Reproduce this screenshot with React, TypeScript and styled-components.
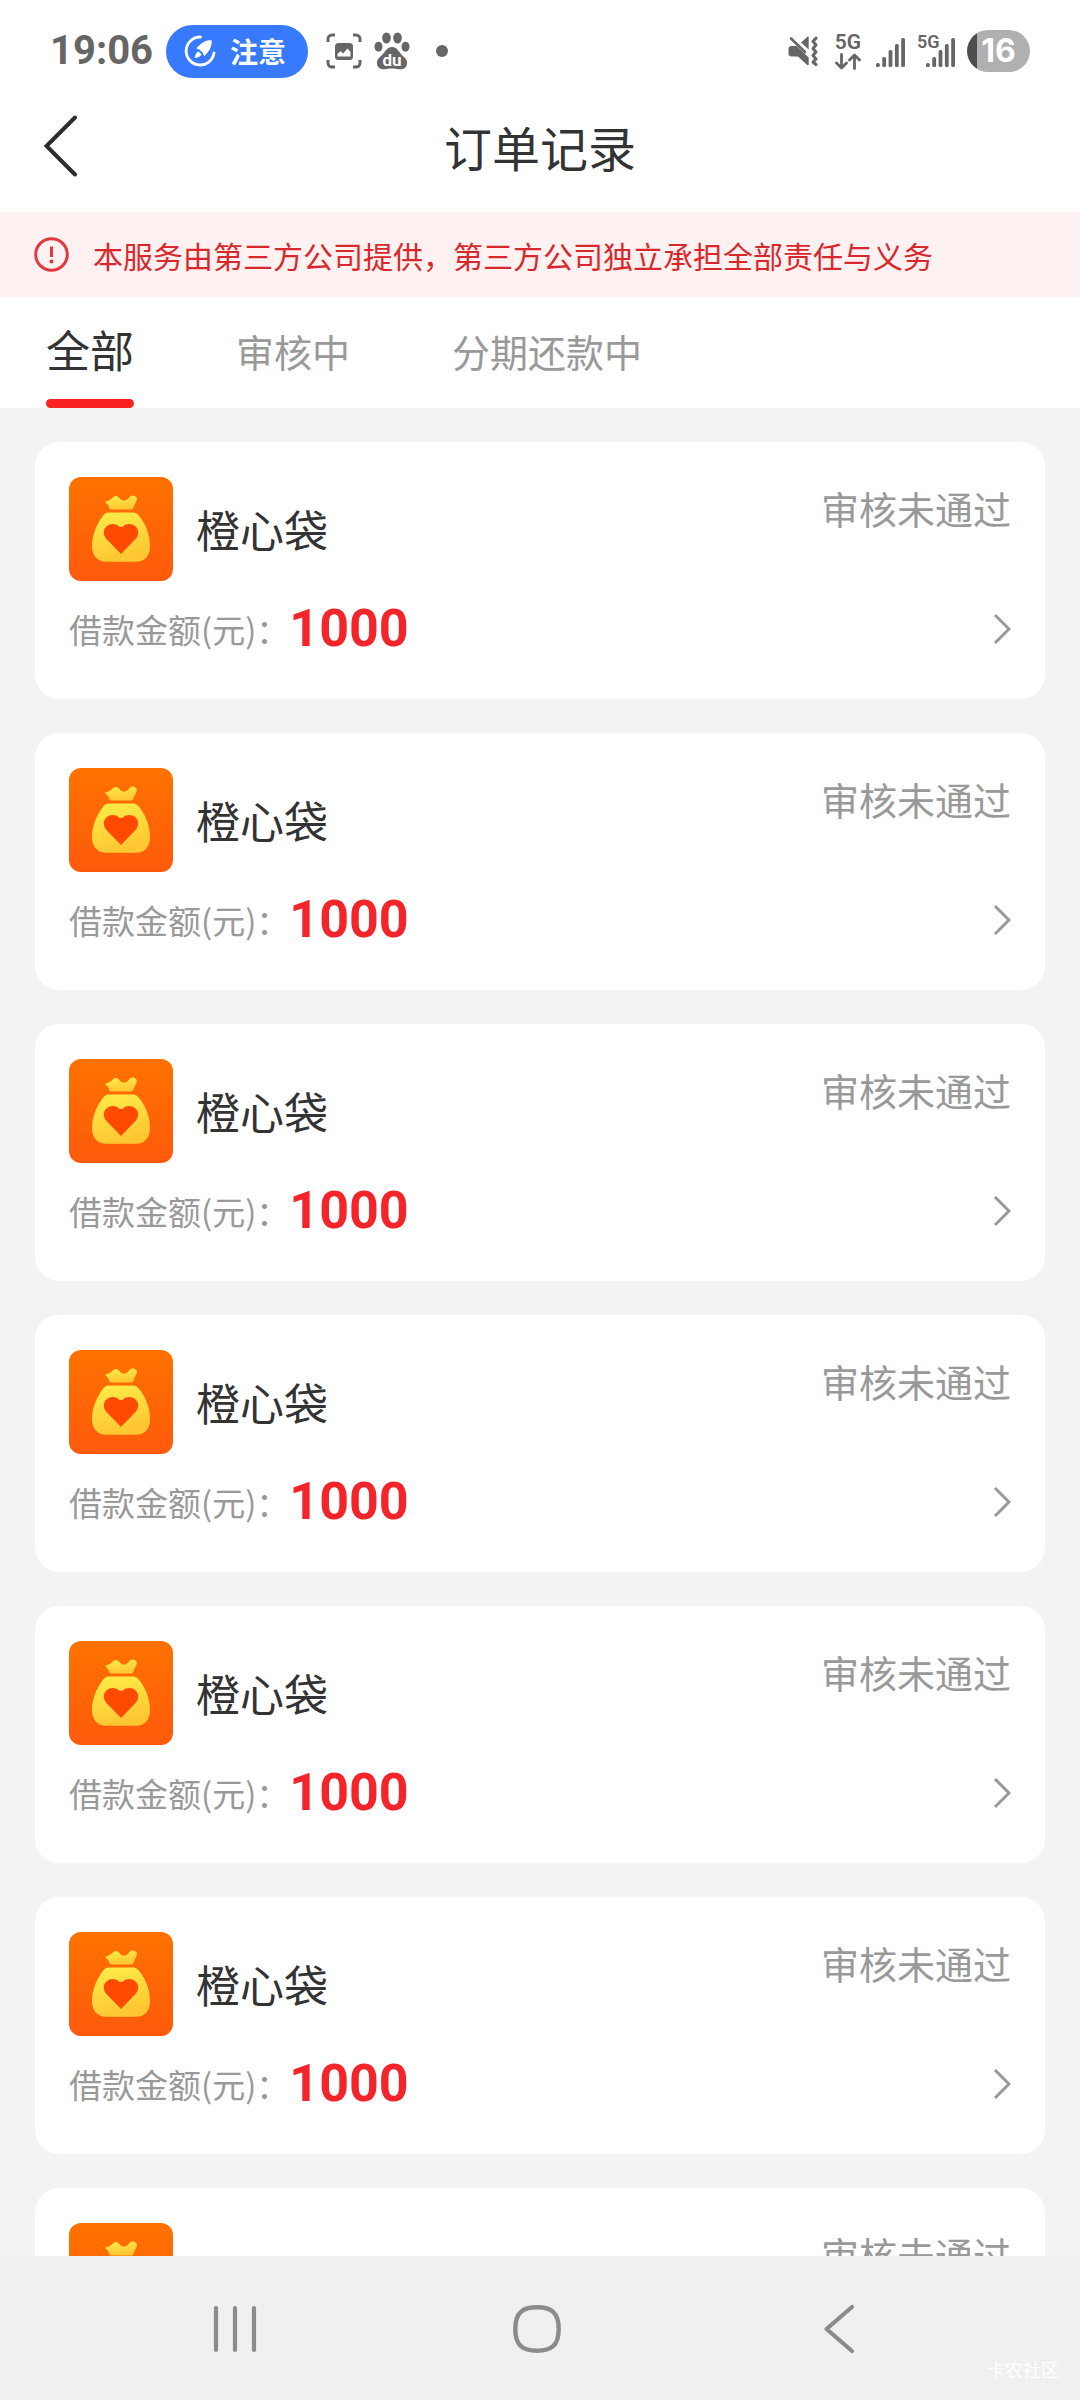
import React, { useState } from "react";
import styled, { createGlobalStyle } from "styled-components";

const cjk = `"Noto Sans CJK SC", sans-serif`;
const latin = `Roboto, "Noto Sans CJK SC", sans-serif`;

const GlobalStyle = createGlobalStyle`
  *, *::before, *::after { box-sizing: border-box; }
  body { margin: 0; background: #f3f3f3; font-family: ${cjk}; color: #333; }
  button { padding: 0; border: 0; background: none; font: inherit; color: inherit; cursor: pointer; }
  svg { display: block; flex: none; }
`;

const Screen = styled.div`
  display: flex;
  flex-direction: column;
  height: 100vh;
  background: #f3f3f3;
`;

const StatusBar = styled.div`
  display: flex;
  flex: none;
  align-items: center;
  justify-content: space-between;
  height: 102px;
  padding: 0 50px;
  background: #fff;
  color: #666;
  font-family: ${latin};
`;

const StatusGroup = styled.div<{ $gap: number }>`
  display: flex;
  align-items: center;
  gap: ${(p) => p.$gap}px;
`;

const Clock = styled.time`
  font-size: 40px;
  font-weight: 700;
  line-height: 48px;
`;

const NoticePill = styled.div`
  display: flex;
  align-items: center;
  gap: 14px;
  height: 53px;
  margin: 0 6px 0 1px;
  padding: 0 22px 0 18px;
  border-radius: 27px;
  background: #387aff;
  color: #fff;
  font-family: ${cjk};
  font-size: 28px;
  font-weight: 700;
  line-height: 53px;
`;

const Dot = styled.span`
  width: 12px;
  height: 12px;
  margin-left: 14px;
  border-radius: 50%;
  background: #666;
`;

const Network = styled.div`
  display: flex;
  flex-direction: column;
  align-items: center;
  gap: 2px;
  margin: 0 4px 0 6px;
  font-size: 21px;
  font-weight: 600;
  line-height: 18px;
`;

const Battery = styled.div`
  display: flex;
  align-items: center;
  justify-content: center;
  width: 63px;
  height: 42px;
  border-radius: 21px;
  background: linear-gradient(to right, #4d4d4d 10px, #b0b0b0 10px);
  color: #fff;
  font-family: Inter, ${latin};
  font-size: 32px;
  font-weight: 700;
  line-height: 42px;
`;

const Header = styled.header`
  display: grid;
  flex: none;
  grid-template-columns: 120px 1fr 120px;
  align-items: center;
  height: 110px;
  padding-bottom: 22px;
  background: #fff;
`;

const BackButton = styled.button`
  display: flex;
  padding-left: 43px;
`;

const Title = styled.h1`
  margin: 0;
  font-size: 48px;
  font-weight: 400;
  line-height: 72px;
  text-align: center;
`;

const Notice = styled.div`
  display: flex;
  flex: none;
  align-items: center;
  gap: 24px;
  min-height: 85px;
  padding: 0 34px;
  background: #fef1f1;
  color: #d9282b;
  font-size: 30px;
  line-height: 44px;
`;

const Tabs = styled.div`
  display: flex;
  flex: none;
  gap: 102px;
  height: 111px;
  padding: 0 46px;
  background: #fff;
`;

const Tab = styled.button<{ $active: boolean }>`
  display: flex;
  flex-direction: column;
  justify-content: space-between;
  padding-top: ${(p) => (p.$active ? 4 : 6)}px;
  color: ${(p) => (p.$active ? "#333" : "#999")};
  font-size: ${(p) => (p.$active ? 44 : 38)}px;
  line-height: 96px;

  &::after {
    content: "";
    width: 100%;
    height: 9px;
    border-radius: 5px;
    background: ${(p) => (p.$active ? "#fa2323" : "transparent")};
  }
`;

const OrderList = styled.ul`
  display: flex;
  flex: 1;
  flex-direction: column;
  gap: 34px;
  min-height: 0;
  margin: 0;
  padding: 34px 35px;
  overflow-y: auto;
  scrollbar-width: none;
  list-style: none;
`;

const Card = styled.li`
  flex: none;
  padding: 35px 34px 40px;
  border-radius: 24px;
  background: #fff;
`;

const CardHead = styled.div`
  display: flex;
  align-items: center;
  gap: 23px;
`;

const ProductName = styled.h2`
  flex: 1;
  margin: 0;
  font-size: 44px;
  font-weight: 400;
  line-height: 64px;
`;

const OrderStatus = styled.span`
  align-self: flex-start;
  color: #999;
  font-size: 38px;
  line-height: 62px;
`;

const CardFoot = styled.div`
  display: flex;
  align-items: center;
  justify-content: space-between;
  height: 60px;
  margin-top: 18px;
`;

const Amount = styled.p`
  display: flex;
  align-items: center;
  margin: 0;
`;

const AmountLabel = styled.span`
  color: #999;
  font-size: 33px;
  line-height: 60px;
`;

const AmountValue = styled.strong`
  color: #f4252a;
  font-family: ${latin};
  font-size: 52px;
  font-weight: 700;
  line-height: 60px;
`;

const NavBar = styled.nav`
  position: relative;
  display: flex;
  flex: none;
  height: 144px;
  padding: 2px 90px 0 84px;
  background: #f0f0f3;
`;

const NavButton = styled.button`
  display: flex;
  flex: 1;
  align-items: center;
  justify-content: center;
`;

const Watermark = styled.span`
  position: absolute;
  right: 21px;
  bottom: 18px;
  color: #fff;
  font-size: 18px;
  line-height: 26px;
`;

const RocketIcon = () => (
  <svg width="32" height="32" viewBox="0 0 32 32" fill="none" aria-hidden="true">
    <path d="M16.5 2A14 14 0 1 0 30 18" stroke="#fff" strokeWidth="2.8" strokeLinecap="round" />
    <path d="M27.5 5c.8 5.500-1.300 10.500-7.200 16.200l-1.600-3.400-3-3-3.400-1.400C16.700 8.200 21.500 5 27.500 5Z" fill="#fff" />
    <path d="M14.500 16.500l3 2.800c-.8 2.200-3 3.500-6.700 3.700.2-2.900 1.300-5.300 3.700-6.500Z" fill="#fff" />
  </svg>
);

const CaptureIcon = () => (
  <svg width="36" height="36" viewBox="0 0 36 36" fill="none" aria-hidden="true">
    <path
      d="M2 9V6a4 4 0 0 1 4-4h3M27 2h3a4 4 0 0 1 4 4v3M34 27v3a4 4 0 0 1-4 4h-3M9 34H6a4 4 0 0 1-4-4v-3"
      stroke="#666"
      strokeWidth="3"
    />
    <rect x="9" y="10" width="18" height="17" rx="3.500" fill="#666" />
    <path d="M11.500 23.500v-2.500l3-3 2.500 2.500 4.500-5 3 3.500v4.500Z" fill="#fff" />
  </svg>
);

const PawIcon = () => (
  <svg width="36" height="38" viewBox="0 0 36 38" fill="#666" aria-hidden="true">
    <ellipse cx="12.500" cy="6" rx="4.300" ry="5.500" />
    <ellipse cx="23.500" cy="6" rx="4.300" ry="5.500" />
    <ellipse cx="4.500" cy="14.800" rx="4" ry="5" />
    <ellipse cx="31.500" cy="14.800" rx="4" ry="5" />
    <path d="M18 15c5 0 6.500 4.500 10 8 3.500 3.200 5.500 5 5 9-.6 4.300-4.300 5.500-7.500 5.300-2.800-.2-4.700-.8-7.500-.8s-4.700.6-7.500.8C7.300 37.500 3.600 36.300 3 32c-.5-4 1.500-5.800 5-9 3.500-3.500 5-8 10-8Z" />
    <text x="18" y="34" textAnchor="middle" fill="#fff" fontSize="17" fontWeight="700" fontFamily="Roboto, sans-serif">
      du
    </text>
  </svg>
);

const MuteIcon = () => (
  <svg width="30" height="30" viewBox="0 0 30 30" fill="none" aria-hidden="true">
    <path d="M13 6.500 19.500 0.800c.6-.5 1.200-.2 1.200.6V13.500Z" fill="#666" />
    <path d="M3.500 10H8.500L20.700 21.500v7c0 .9-.8 1.200-1.500.6L10 20.500H3.500C1.500 20.500.5 19.300.5 17.500v-4.500c0-1.800 1-3 3-3Z" fill="#666" />
    <path d="M3 2.500 17 16" stroke="#666" strokeWidth="2.600" strokeLinecap="round" />
    <path
      d="m28 2-3 3.500 3 3.500-3 3.500 3 3.500-3 3.500 3 3.500-3 3 3 2.500"
      stroke="#666"
      strokeWidth="3"
      strokeLinecap="round"
      strokeLinejoin="round"
    />
  </svg>
);

const ArrowsIcon = () => (
  <svg width="26" height="17" viewBox="0 0 26 17" fill="none" stroke="#666" strokeWidth="2.800" strokeLinecap="round" strokeLinejoin="round" aria-hidden="true">
    <path d="M6.500 1.500v13M1.500 10l5 5 5-5" />
    <path d="M19.500 15.500v-13M14.500 7l5-5 5 5" />
  </svg>
);

const signalBars = [4, 10, 17, 23, 29];

const SignalIcon = ({ label }: { label?: string }) => {
  const offset = label ? 9 : 0;
  return (
    <svg width={30 + offset} height="36" viewBox={`0 0 ${30 + offset} 36`} fill="#666" aria-hidden="true">
      {signalBars.map((h, i) => (
        <rect key={h} x={offset + i * 6.3} y={34 - h} width="3.800" height={h} rx="1.600" />
      ))}
      {label && (
        <text x="0" y="15" fontSize="18" fontWeight="600" fontFamily="Roboto, sans-serif">
          {label}
        </text>
      )}
    </svg>
  );
};

const BackIcon = () => (
  <svg width="36" height="62" viewBox="0 0 36 62" fill="none" aria-hidden="true">
    <path d="M32 2.500 3.500 31 32 59.500" stroke="#2d2d2d" strokeWidth="4" strokeLinecap="round" />
  </svg>
);

const AlertIcon = () => (
  <svg width="35" height="35" viewBox="0 0 35 35" fill="none" aria-hidden="true">
    <circle cx="17.500" cy="17.500" r="15.800" stroke="#e03a3d" strokeWidth="3" />
    <path d="M17.500 9.500v10.500" stroke="#e03a3d" strokeWidth="3" />
    <circle cx="17.500" cy="24.500" r="2" fill="#e03a3d" />
  </svg>
);

const MoneyBagIcon = ({ id }: { id: string }) => (
  <svg width="104" height="104" viewBox="0 0 104 104" aria-hidden="true">
    <defs>
      <linearGradient id={`${id}-tile`} x1="0" y1="0" x2="0" y2="1">
        <stop offset="0" stopColor="#ff7200" />
        <stop offset="1" stopColor="#ff5a0c" />
      </linearGradient>
      <linearGradient id={`${id}-bag`} x1="0" y1="0" x2="0.300" y2="1">
        <stop offset="0" stopColor="#ffee4a" />
        <stop offset="1" stopColor="#ffc732" />
      </linearGradient>
    </defs>
    <rect width="104" height="104" rx="12" fill={`url(#${id}-tile)`} />
    <path
      d="M36 24.500c3-.8 5.500-1.500 8-4.300 2-1.800 4.300-1.400 6.200.5 2.900 3.500 6.800 4.300 9.800-.2 2-2.800 5.500-2.500 7.200-.4 1.200 1.600.6 3.300-.2 5L64 31.500c-.3.800-.8 1.100-1.600 1.100H42c-.8 0-1.300-.4-1.600-1.100l-1-2.700Z"
      fill={`url(#${id}-bag)`}
    />
    <path
      d="M40 35.500h24c3 0 4.500 1.300 6.200 3.500C77 47.500 81 58 81 69c0 9.500-5 15.800-14 15.800H37.500C28.300 84.800 23 78.500 23 69c0-11 4.500-21.500 10.800-30 1.700-2.200 3.200-3.500 6.200-3.500Z"
      fill={`url(#${id}-bag)`}
    />
    <path d="M52 77 37.500 62c-3.600-4-3.500-9.500.2-12.700 3.900-3.300 8.900-2.800 12.300.1 1.200.9 2.800.9 4 0 3.400-2.900 8.400-3.400 12.300-.1 3.700 3.200 3.800 8.700.2 12.700Z" fill="#ff4a00" />
  </svg>
);

const ChevronIcon = () => (
  <svg width="18" height="32" viewBox="0 0 18 32" fill="none" aria-hidden="true">
    <path d="M2 2 16 16 2 30" stroke="#999" strokeWidth="3" />
  </svg>
);

const RecentsIcon = () => (
  <svg width="44" height="48" viewBox="0 0 44 48" stroke="#8b8b8d" strokeWidth="4.200" strokeLinecap="round" aria-hidden="true">
    <path d="M3 3v42M22 3v42M41 3v42" />
  </svg>
);

const HomeIcon = () => (
  <svg width="50" height="50" viewBox="0 0 50 50" fill="none" aria-hidden="true">
    <path
      d="M25 3.300C39 3.300 46.700 8 46.700 25S39 46.700 25 46.700 3.300 42 3.300 25 11 3.300 25 3.300Z"
      stroke="#8b8b8d"
      strokeWidth="4.400"
    />
  </svg>
);

const NavBackIcon = () => (
  <svg width="32" height="50" viewBox="0 0 32 50" fill="none" aria-hidden="true">
    <path d="M29 3 3.500 25 29 47" stroke="#8b8b8d" strokeWidth="4.200" strokeLinecap="round" strokeLinejoin="round" />
  </svg>
);

const tabs = ["全部", "审核中", "分期还款中"];

const orders = Array.from({ length: 7 }, (_, i) => ({
  id: `order-${i + 1}`,
  name: "橙心袋",
  status: "审核未通过",
  amount: 1000,
}));

export default function App() {
  const [active, setActive] = useState(tabs[0]);

  return (
    <Screen>
      <GlobalStyle />
      <StatusBar>
        <StatusGroup $gap={12}>
          <Clock>19:06</Clock>
          <NoticePill>
            <RocketIcon />
            注意
          </NoticePill>
          <CaptureIcon />
          <PawIcon />
          <Dot />
        </StatusGroup>
        <StatusGroup $gap={11}>
          <MuteIcon />
          <Network>
            5G
            <ArrowsIcon />
          </Network>
          <SignalIcon />
          <SignalIcon label="5G" />
          <Battery>16</Battery>
        </StatusGroup>
      </StatusBar>

      <Header>
        <BackButton aria-label="返回">
          <BackIcon />
        </BackButton>
        <Title>订单记录</Title>
      </Header>

      <Notice role="note">
        <AlertIcon />
        本服务由第三方公司提供，第三方公司独立承担全部责任与义务
      </Notice>

      <Tabs role="tablist">
        {tabs.map((tab) => (
          <Tab key={tab} role="tab" aria-selected={tab === active} $active={tab === active} onClick={() => setActive(tab)}>
            {tab}
          </Tab>
        ))}
      </Tabs>

      <OrderList>
        {orders.map((order) => (
          <Card key={order.id}>
            <CardHead>
              <MoneyBagIcon id={order.id} />
              <ProductName>{order.name}</ProductName>
              <OrderStatus>{order.status}</OrderStatus>
            </CardHead>
            <CardFoot>
              <Amount>
                <AmountLabel>借款金额(元)：</AmountLabel>
                <AmountValue>{order.amount}</AmountValue>
              </Amount>
              <button aria-label="查看详情">
                <ChevronIcon />
              </button>
            </CardFoot>
          </Card>
        ))}
      </OrderList>

      <NavBar>
        <NavButton aria-label="最近任务">
          <RecentsIcon />
        </NavButton>
        <NavButton aria-label="主屏幕">
          <HomeIcon />
        </NavButton>
        <NavButton aria-label="后退">
          <NavBackIcon />
        </NavButton>
        <Watermark>卡农社区</Watermark>
      </NavBar>
    </Screen>
  );
}
